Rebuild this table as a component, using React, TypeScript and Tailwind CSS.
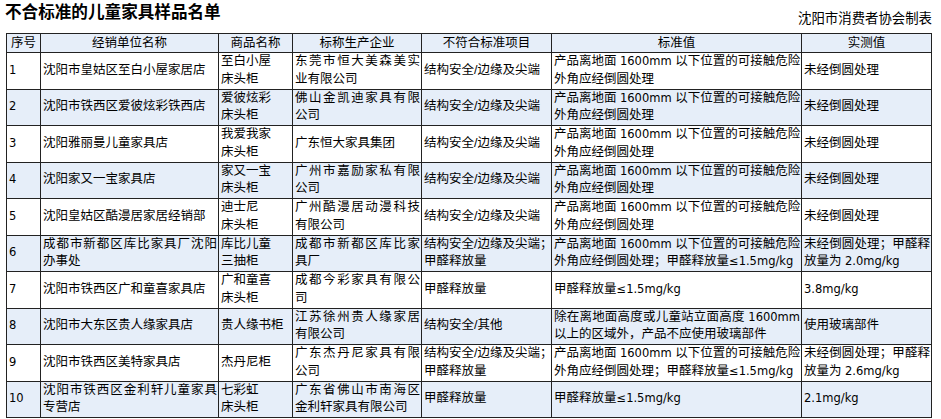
import React from 'react';

const font = "font-['Liberation_Sans','Noto_Sans_CJK_SC',sans-serif]";

const headers = ['序号', '经销单位名称', '商品名称', '标称生产企业', '不符合标准项目', '标准值', '实测值'];
const widths = ['w-[34px]', 'w-[178px]', 'w-[74px]', 'w-[129px]', 'w-[130px]', 'w-[250px]', 'w-[130px]'];
// columns where wrapped lines are spread to the full cell width
const justified = [false, true, false, true, true, true, true];

const edgeRule = '产品离地面 1600mm 以下位置的可接触危险\n外角应经倒圆处理';
const edgeFormRule = '产品离地面 1600mm 以下位置的可接触危险\n外角应经倒圆处理；甲醛释放量≤1.5mg/kg';
const formRule = '甲醛释放量≤1.5mg/kg';

const rows: string[][] = [
  ['1', '沈阳市皇姑区至白小屋家居店', '至白小屋\n床头柜', '东莞市恒大美森美实\n业有限公司', '结构安全/边缘及尖端', edgeRule, '未经倒圆处理'],
  ['2', '沈阳市铁西区爱彼炫彩铁西店', '爱彼炫彩\n床头柜', '佛山金凯迪家具有限\n公司', '结构安全/边缘及尖端', edgeRule, '未经倒圆处理'],
  ['3', '沈阳雅丽曼儿童家具店', '我爱我家\n床头柜', '广东恒大家具集团', '结构安全/边缘及尖端', edgeRule, '未经倒圆处理'],
  ['4', '沈阳家又一宝家具店', '家又一宝\n床头柜', '广州市嘉励家私有限\n公司', '结构安全/边缘及尖端', edgeRule, '未经倒圆处理'],
  ['5', '沈阳皇姑区酷漫居家居经销部', '迪士尼\n床头柜', '广州酷漫居动漫科技\n有限公司', '结构安全/边缘及尖端', edgeRule, '未经倒圆处理'],
  ['6', '成都市新都区库比家具厂沈阳\n办事处', '库比儿童\n三抽柜', '成都市新都区库比家\n具厂', '结构安全/边缘及尖端；\n甲醛释放量', edgeFormRule, '未经倒圆处理；甲醛释\n放量为 2.0mg/kg'],
  ['7', '沈阳市铁西区广和童喜家具店', '广和童喜\n床头柜', '成都今彩家具有限公\n司', '甲醛释放量', formRule, '3.8mg/kg'],
  ['8', '沈阳市大东区贵人缘家具店', '贵人缘书柜', '江苏徐州贵人缘家居\n有限公司', '结构安全/其他', '除在离地面高度或儿童站立面高度 1600mm\n以上的区域外，产品不应使用玻璃部件', '使用玻璃部件'],
  ['9', '沈阳市铁西区美特家具店', '杰丹尼柜', '广东杰丹尼家具有限\n公司', '结构安全/边缘及尖端；\n甲醛释放量', edgeFormRule, '未经倒圆处理；甲醛释\n放量为 2.6mg/kg'],
  ['10', '沈阳市铁西区金利轩儿童家具\n专营店', '七彩虹\n床头柜', '广东省佛山市南海区\n金利轩家具有限公司', '甲醛释放量', formRule, '2.1mg/kg'],
];

// numbers and units are set in a wider latin face, like the source page
function Run({ text }: { text: string }) {
  const parts = text.split(/(≤?[0-9A-Za-z][0-9A-Za-z./]*)/);
  return (
    <>
      {parts.map((p, i) =>
        i % 2 === 1 ? (
          <span key={i} className="font-['DejaVu_Sans',sans-serif] text-[11.5px]">
            {p}
          </span>
        ) : (
          p
        ),
      )}
    </>
  );
}

function Cell({ text, justify }: { text: string; justify: boolean }) {
  const lines = text.split('\n');
  return (
    <>
      {lines.map((line, i) => (
        <div
          key={i}
          className={justify && i < lines.length - 1 ? 'text-justify [text-align-last:justify] whitespace-nowrap' : 'whitespace-nowrap'}
        >
          <Run text={line} />
        </div>
      ))}
    </>
  );
}

export default function App() {
  return (
    <div className={`w-[941px] h-[419px] bg-white text-black overflow-hidden ${font}`}>
      <div className="flex items-center justify-between h-[33px] pl-[5px] pr-[9px]">
        <h1 className="text-[16.6px] font-semibold leading-none -mt-[6px]">不合标准的儿童家具样品名单</h1>
        <span className="text-[13.4px] leading-none mt-[4px]">沈阳市消费者协会制表</span>
      </div>
      <table className="ml-[6px] w-[925px] table-fixed border-collapse text-[12.5px]">
        <colgroup>
          {widths.map((w, i) => (
            <col key={i} className={w} />
          ))}
        </colgroup>
        <thead>
          <tr className="bg-[#e6eef9]">
            {headers.map((h) => (
              <th key={h} className="h-[19px] border border-[#222] p-0 font-normal text-center leading-[17px]">
                {h}
              </th>
            ))}
          </tr>
        </thead>
        <tbody>
          {rows.map((row, r) => (
            <tr key={r} className={r % 2 === 1 ? 'bg-[#e6eef9]' : 'bg-white'}>
              {row.map((cell, c) => (
                <td key={c} className="h-[36.5px] border border-[#222] pl-[2px] pr-[1px] py-0 align-middle leading-[17.6px]">
                  <Cell text={cell} justify={justified[c]} />
                </td>
              ))}
            </tr>
          ))}
        </tbody>
      </table>
    </div>
  );
}
